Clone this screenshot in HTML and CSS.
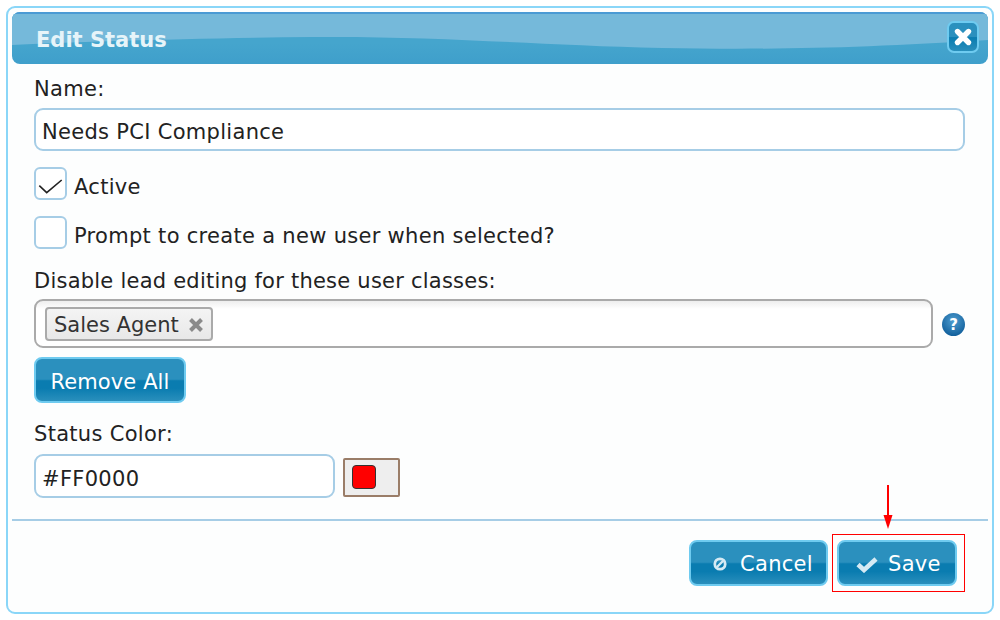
FILE: index.html
```html
<!DOCTYPE html>
<html lang="en">
<head>
    <meta charset="UTF-8">
    <title>Edit Status</title>
    <link rel="stylesheet" href="styles.css">
</head>
<body>
    <div class="dialog">
        <div class="dialog-header">
            <svg class="header-wave" width="976" height="50" viewBox="0 0 976 50"><path d="M0 0 H976 V26 C850 34 760 36 650 34 C520 31 430 22 300 23 C180 24 60 28 0 31 Z" fill="#75b9da"/></svg>
            <span class="dialog-title">Edit Status</span>
            <button class="close-btn" type="button">
                <svg width="20" height="20" viewBox="0 0 20 20"><path d="M4.5 4.5 L15.5 15.5 M15.5 4.5 L4.5 15.5" stroke="#fff" stroke-width="5.4" stroke-linecap="round"/></svg>
            </button>
        </div>

        <form class="dialog-body">
            <label class="field-label">Name:</label>
            <input class="text-input name-input" type="text" value="Needs PCI Compliance">

            <div class="check-row check-first">
                <span class="checkbox">
                    <svg width="28" height="28" viewBox="0 0 28 28"><path d="M2.3 16.7 L9.7 23.7 L24.7 11" fill="none" stroke="#222" stroke-width="1.6"/></svg>
                </span>
                <span class="check-label">Active</span>
            </div>
            <div class="check-row check-second">
                <span class="checkbox"></span>
                <span class="check-label">Prompt to create a new user when selected?</span>
            </div>

            <label class="field-label classes-label">Disable lead editing for these user classes:</label>
            <div class="select-row">
                <div class="multi-select">
                    <span class="tag">Sales Agent
                        <svg width="16" height="16" viewBox="0 0 16 16"><path d="M2.5 2.5 L13.5 13.5 M13.5 2.5 L2.5 13.5" stroke="#8a8a8a" stroke-width="4"/></svg>
                    </span>
                </div>
                <span class="help-icon">?</span>
            </div>
            <button class="btn remove-all" type="button">Remove All</button>

            <label class="field-label color-label">Status Color:</label>
            <div class="color-row">
                <input class="text-input color-input" type="text" value="#FF0000">
                <span class="color-btn"><span class="color-swatch"></span></span>
            </div>
        </form>

        <div class="dialog-footer">
            <button class="btn footer-btn cancel-btn" type="button">
                <svg width="16" height="16" viewBox="0 0 16 16"><circle cx="8" cy="8" r="5.2" fill="none" stroke="#d5eaf4" stroke-width="2.8"/><path d="M5 11 L11 5" stroke="#d5eaf4" stroke-width="2.4"/></svg>
                Cancel
            </button>
            <button class="btn footer-btn save-btn" type="button">
                <svg width="22" height="18" viewBox="0 0 22 18"><path d="M2 9.5 L8 15 L20 4" fill="none" stroke="#d5eaf4" stroke-width="4.6"/></svg>
                Save
            </button>
        </div>

        <!-- red markup drawn over the screenshot -->
        <div class="mark-box"></div>
        <svg class="mark-arrow" width="12" height="46" viewBox="0 0 12 46"><path d="M6 0 V32" stroke="#f00" stroke-width="2"/><path d="M1.5 30 H10.5 L6 44 Z" fill="#f00"/></svg>
    </div>
</body>
</html>
```

FILE: styles.css
```css
* {
    box-sizing: border-box;
}

body {
    margin: 0;
    width: 1000px;
    height: 620px;
    padding: 6px;
    background-color: #fff;
    font-family: "DejaVu Sans", Verdana, sans-serif;
    font-size: 21px;
    letter-spacing: 0.3px;
    color: #222;
    overflow: hidden;
}

.dialog {
    position: relative;
    width: 988px;
    height: 608px;
    padding: 4px;
    border: 2px solid #8ad6f8;
    border-radius: 9px;
    background-color: #fdfefe;
}

.dialog-header {
    position: relative;
    display: flex;
    align-items: center;
    justify-content: space-between;
    height: 52px;
    padding: 0 9px 0 24px;
    border-radius: 8px;
    overflow: hidden;
    background: linear-gradient(#45a5cd 60%, #3f9fcb 100%);
    box-shadow: inset 0 2px 0 #4a9ad4;
}

.header-wave {
    position: absolute;
    left: 0;
    top: 2px;
}

.dialog-title {
    position: relative;
    top: 2px;
    font-size: 21px;
    font-weight: bold;
    letter-spacing: 0;
    color: #e6f4f9;
}

.close-btn {
    position: relative;
    display: flex;
    align-items: center;
    justify-content: center;
    width: 32px;
    height: 32px;
    margin-top: -3px;
    padding: 0;
    border: 2px solid #6fcbf0;
    border-radius: 7px;
    background: linear-gradient(#2b90be 0%, #2b90be 50%, #0a7cb0 52%, #2a8fbc 100%);
}

.dialog-body {
    display: flex;
    flex-direction: column;
    align-items: flex-start;
    padding: 0 22px;
}

.field-label {
    display: block;
    line-height: 24px;
    color: #222;
    margin-top: 13px;
}

.text-input {
    height: 43px;
    padding: 4px 6px 0;
    border: 2px solid #a6cde6;
    border-radius: 9px;
    background-color: #fff;
    font-family: inherit;
    font-size: 21px;
    letter-spacing: 0.3px;
    color: #222;
}

.name-input {
    width: 931px;
    margin-top: 7px;
}

.check-row {
    display: flex;
    align-items: center;
    gap: 7px;
}

.check-first {
    margin-top: 16px;
}

.check-second {
    margin-top: 16px;
}

.checkbox {
    display: block;
    width: 33px;
    height: 33px;
    border: 2px solid #a6cde6;
    border-radius: 6px;
    background-color: #fff;
}

.checkbox svg {
    display: block;
    margin: 0 0 0 1px;
}

.check-label {
    position: relative;
    top: 3px;
    line-height: 24px;
}

.classes-label {
    margin-top: 20px;
    letter-spacing: 0.23px;
}

.select-row {
    display: flex;
    align-items: center;
    margin-top: 6px;
}

.multi-select {
    display: flex;
    align-items: center;
    width: 899px;
    height: 49px;
    padding: 0 9px;
    border: 2px solid #aaa;
    border-radius: 9px;
    background: linear-gradient(#eee 0, #fff 8px);
}

.tag {
    display: flex;
    align-items: center;
    gap: 9px;
    height: 34px;
    padding: 2px 7px 0;
    border: 2px solid #aaa;
    border-radius: 4px;
    background: linear-gradient(#f4f4f4, #e8e8e8);
    letter-spacing: 0;
    color: #333;
}

.help-icon {
    display: flex;
    align-items: center;
    justify-content: center;
    width: 23px;
    height: 23px;
    margin: 2px 0 0 9px;
    border-radius: 50%;
    background: radial-gradient(circle at 50% 35%, #4f9ed0, #14629e 75%);
    font-size: 15px;
    font-weight: bold;
    letter-spacing: 0;
    color: #fff;
}

.btn {
    border: 2px solid #6fcbf0;
    border-radius: 8px;
    background: linear-gradient(#2b90be 0%, #2b90be 48%, #0a7cb0 52%, #0a7cb0 70%, #2a8fbc 100%);
    font-family: inherit;
    font-size: 21px;
    letter-spacing: 0.3px;
    color: #fff;
}

.remove-all {
    width: 152px;
    height: 46px;
    margin-top: 9px;
    padding: 3px 0 0;
    letter-spacing: 0.1px;
}

.color-label {
    margin-top: 19px;
}

.color-row {
    display: flex;
    align-items: center;
    gap: 8px;
    margin-top: 8px;
}

.color-input {
    width: 301px;
    height: 44px;
    padding: 6px 6px 0;
}

.color-btn {
    display: flex;
    align-items: center;
    width: 57px;
    height: 39px;
    margin-top: 2px;
    padding-left: 7px;
    border: 2px solid #9a7d68;
    border-radius: 2px;
    background-color: #eee;
}

.color-swatch {
    display: block;
    width: 24px;
    height: 24px;
    border: 1px solid #333;
    border-radius: 4px;
    background-color: #f00;
}

.dialog-footer {
    display: flex;
    justify-content: flex-end;
    gap: 9px;
    margin-top: 21px;
    padding: 19px 31px 0 0;
    border-top: 2px solid #a6cde6;
}

.footer-btn {
    display: flex;
    align-items: center;
    height: 46px;
    padding-top: 3px;
}

.cancel-btn {
    width: 139px;
    padding-left: 21px;
    gap: 12px;
}

.save-btn {
    width: 120px;
    padding-left: 17px;
    gap: 10px;
}

.mark-box {
    position: absolute;
    left: 824px;
    top: 526px;
    width: 133px;
    height: 58px;
    border: 1px solid #f00;
}

.mark-arrow {
    position: absolute;
    left: 874px;
    top: 477px;
}
```
